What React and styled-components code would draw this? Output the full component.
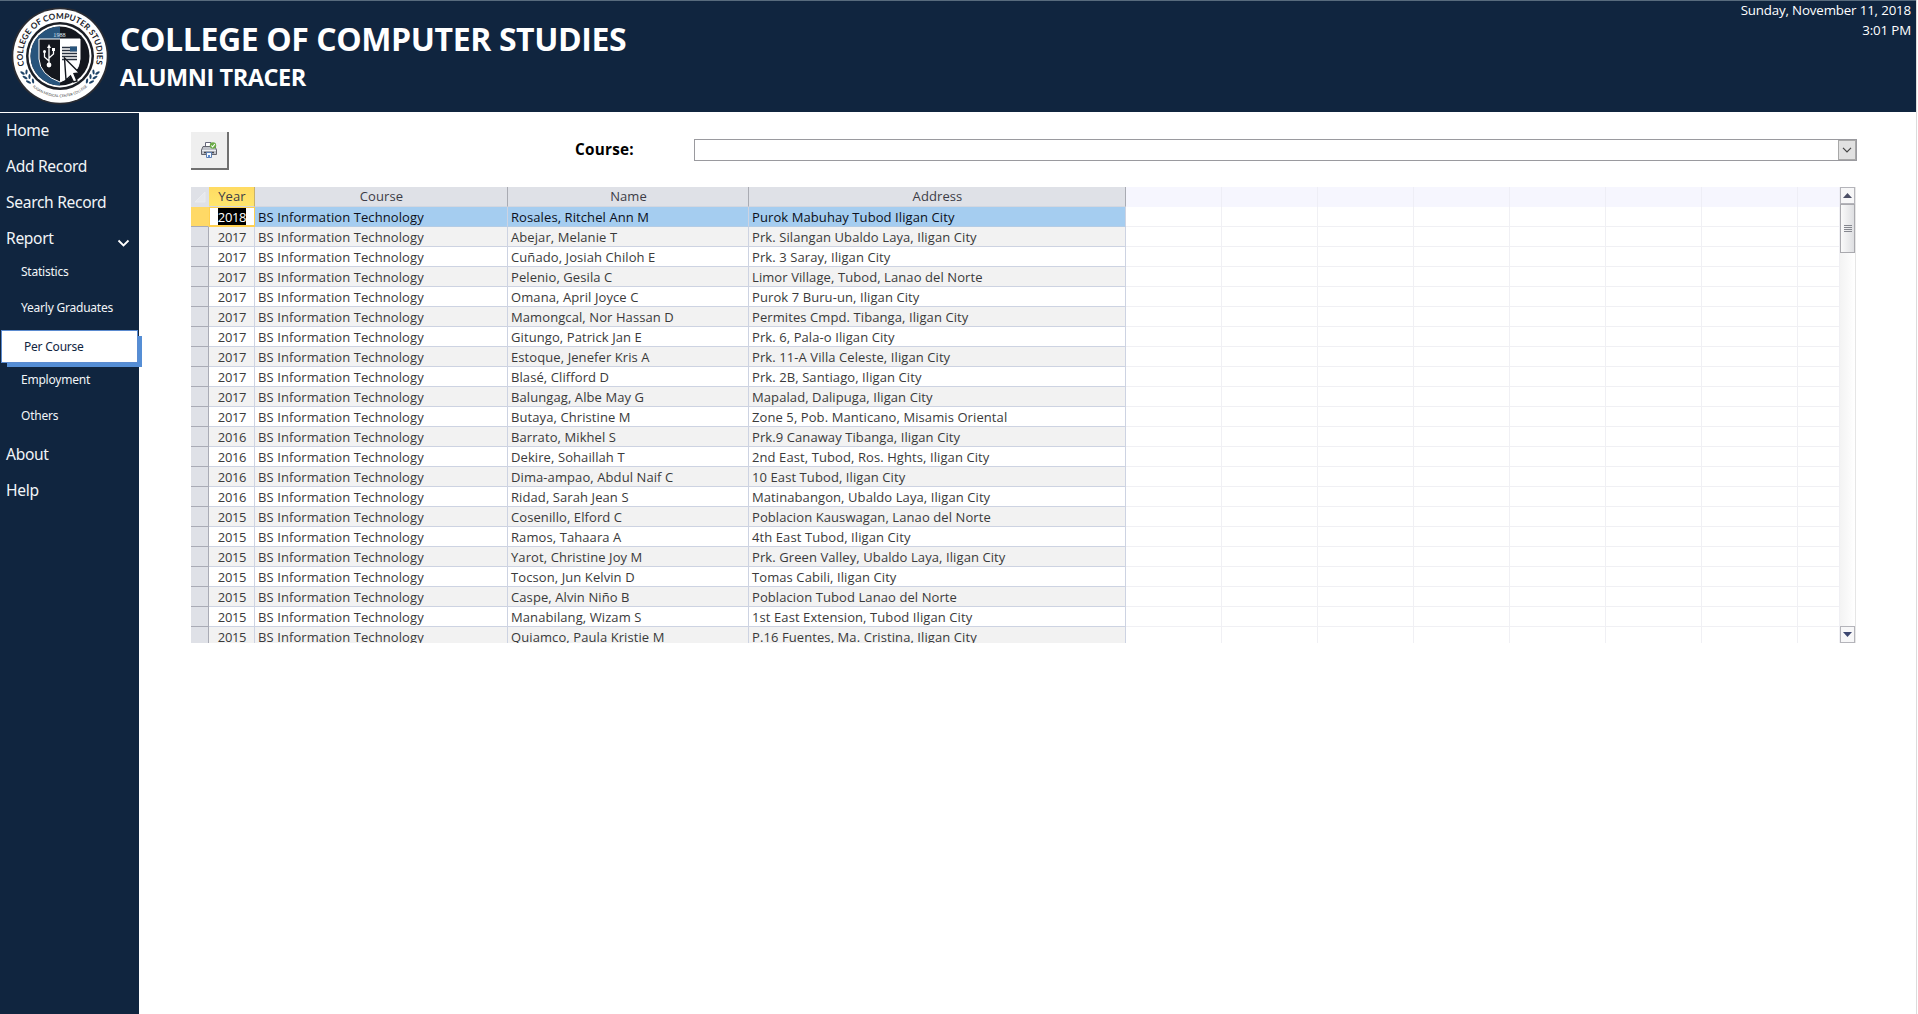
import React from "react";
import styled, { createGlobalStyle, css } from "styled-components";

const NAVY = "#10253f";

const Global = createGlobalStyle`
  * { box-sizing: border-box; }
  html, body { margin: 0; padding: 0; background: #fff; overflow: hidden; }
  body { font-family: "Open Sans", "Noto Sans", sans-serif; }
`;

const Page = styled.div`
  width: 1917px;
  height: 1014px;
  display: flex;
  flex-direction: column;
  border-right: 1px solid #dcdcdc;
  background: #fff;
`;

const Header = styled.header`
  height: 112px;
  flex: none;
  display: flex;
  background: ${NAVY};
  border-top: 1px solid #586b7d;
  color: #fff;
  padding: 0 5px 0 11px;
`;

const LogoSvg = styled.svg`
  width: 98px;
  height: 98px;
  margin-top: 6px;
  flex: none;
`;

const Titles = styled.div`
  flex: 1;
  display: flex;
  flex-direction: column;
  padding: 16px 0 0 11px;
  font-weight: 700;
  white-space: nowrap;
`;

const Title = styled.div`
  font-family: "Open Sans", sans-serif;
  font-size: 32px;
  line-height: 44px;
  letter-spacing: -0.4px;
`;

const Subtitle = styled.div`
  font-family: "Open Sans", sans-serif;
  font-size: 23.5px;
  line-height: 32px;
  letter-spacing: -0.42px;
`;

const Clock = styled.div`
  display: flex;
  flex-direction: column;
  align-items: flex-end;
  margin-top: -1px;
  font-size: 13.3px;
  line-height: 20px;
  letter-spacing: -0.15px;
`;

const Body = styled.div`
  flex: 1;
  display: flex;
  margin-top: 1px;
  min-height: 0;
`;

const Sidebar = styled.nav`
  width: 139px;
  flex: none;
  background: ${NAVY};
  color: #f2f5f8;
  display: flex;
  flex-direction: column;
`;

const NavItem = styled.div`
  height: 36px;
  flex: none;
  display: flex;
  align-items: center;
  justify-content: space-between;
  padding: 0 9px 2px ${(p) => (p.$sub ? 21 : 6)}px;
  font-family: "Noto Sans", sans-serif;
  font-size: ${(p) => (p.$sub ? 12 : 15.6)}px;
  letter-spacing: ${(p) => (p.$sub ? -0.22 : -0.32)}px;
  margin-top: ${(p) => p.$gap || 0}px;
  white-space: nowrap;
  ${(p) =>
    p.$active &&
    css`
      height: 33px;
      width: 137px;
      margin-left: 1px;
      padding-left: 22px;
      padding-bottom: 0;
      color: ${NAVY};
      background: #fff;
      border: 1px solid #5b8bd0;
      box-shadow: 5px 5px 0 -1px #558ed5;
    `}
`;

const Chevron = styled.svg`
  width: 13px;
  height: 9px;
  margin-top: 10px;
`;

const Main = styled.main`
  flex: 1;
  display: flex;
  flex-direction: column;
  padding: 19px 0 0 52px;
`;

const Toolbar = styled.div`
  display: flex;
  align-items: flex-start;
  height: 55px;
`;

const PrintButton = styled.button`
  width: 38px;
  height: 38px;
  padding: 0 0 1px 0;
  display: flex;
  align-items: center;
  justify-content: center;
  background: #efefef;
  border: 0;
  border-right: 2px solid #707070;
  border-bottom: 2px solid #707070;
`;

const FilterLabel = styled.label`
  width: 119px;
  margin-left: 346px;
  padding-top: 6px;
  font-family: "Open Sans", sans-serif;
  font-weight: 700;
  font-size: 15.3px;
  line-height: 22px;
  letter-spacing: 0.25px;
  color: #000;
`;

const Combo = styled.div`
  width: 1163px;
  height: 22px;
  margin-top: 7px;
  display: flex;
  justify-content: flex-end;
  border: 1px solid #9a9a9f;
`;

const ComboArrow = styled.div`
  width: 18px;
  height: 20px;
  display: flex;
  align-items: center;
  justify-content: center;
  background: #e1e1e1;
  border: 1px solid #a8a8a8;
`;

const Sheet = styled.div`
  width: 1665px;
  height: 456px;
  display: flex;
  overflow: hidden;
`;

const Table = styled.div`
  width: 1649px;
  flex: none;
`;

const Line = styled.div`
  display: grid;
  grid-template-columns: 18px 46px 253px 241px 377px repeat(7, 96px) 42px;
  grid-template-rows: 20px;
  height: 20px;
  line-height: 20px;
  font-size: 13px;
  letter-spacing: 0.09px;
  white-space: nowrap;
`;

const Head = styled.div`
  text-align: center;
  color: #3c3c46;
  background: ${(p) => (p.$active ? "linear-gradient(#ffdb62, #ffe66d)" : "#dfe1e7")};
  border-right: 1px solid ${(p) => (p.$active ? "#c9b16a" : "#a9abb3")};
  border-bottom: 1px solid #d3d7e0;
  padding-left: 1px;
  line-height: 18px;
`;

const Corner = styled.div`
  background: #dfe1e7;
  display: flex;
  align-items: center;
  justify-content: center;
`;

const BlankHead = styled.div`
  background: #f6f6fe;
  border-right: 1px solid #eeeef6;
`;

const Selector = styled.div`
  background: ${(p) => (p.$active ? "#ffd966" : "#dfe1e7")};
  border-right: 1px solid ${(p) => (p.$active ? "#ffd966" : "#a9abb5")};
  border-bottom: 1px solid #a9abb5;
`;

const Cell = styled.div`
  height: 20px;
  padding-left: 3px;
  color: ${(p) => (p.$active ? "#0a1020" : "#3a3a3a")};
  background: ${(p) => (p.$active ? "#a5cdf0" : p.$odd ? "#f2f2f2" : "#fff")};
  border-right: 1px solid #cdd3e2;
  border-bottom: 1px solid ${(p) => (p.$active ? "#b3cce6" : "#cdd3e2")};
`;

const YearCell = styled(Cell)`
  padding: 0 8px 0 0;
  text-align: right;
  letter-spacing: -0.4px;
  ${(p) =>
    p.$active &&
    css`
      background: #fff;
      border: 1px solid #ffd04f;
      border-bottom-width: 2px;
    `}
`;

const Selected = styled.span`
  display: inline-block;
  height: 17px;
  line-height: 18px;
  vertical-align: top;
  background: #000;
  color: #fff;
`;

const Blank = styled.div`
  border-right: 1px solid #f0f0f4;
  border-bottom: 1px solid #f0f0f4;
`;

const ScrollBar = styled.div`
  width: 16px;
  height: 456px;
  flex: none;
  display: flex;
  flex-direction: column;
  background: linear-gradient(90deg, #f3f3f3, #fff);
  border-right: 1px solid #e6e6e6;
`;

const ScrollButton = styled.div`
  width: 15px;
  height: 17px;
  flex: none;
  display: flex;
  align-items: center;
  justify-content: center;
  background: #f7f7f8;
  border: 1px solid #b4b4ba;
`;

const Thumb = styled.div`
  width: 15px;
  height: 49px;
  flex: none;
  display: flex;
  align-items: center;
  justify-content: center;
  background: linear-gradient(90deg, #fafafa, #dedfe2);
  border: 1px solid #a9a9ae;
`;

const Track = styled.div`
  flex: 1;
`;

const people = [
  ["2018", "Rosales, Ritchel Ann M", "Purok Mabuhay Tubod Iligan City"],
  ["2017", "Abejar, Melanie T", "Prk. Silangan Ubaldo Laya, Iligan City"],
  ["2017", "Cuñado, Josiah Chiloh E", "Prk. 3 Saray, Iligan City"],
  ["2017", "Pelenio, Gesila C", "Limor Village, Tubod, Lanao del Norte"],
  ["2017", "Omana, April Joyce C", "Purok 7 Buru-un, Iligan City"],
  ["2017", "Mamongcal, Nor Hassan D", "Permites Cmpd. Tibanga, Iligan City"],
  ["2017", "Gitungo, Patrick Jan E", "Prk. 6, Pala-o Iligan City"],
  ["2017", "Estoque, Jenefer Kris A", "Prk. 11-A Villa Celeste, Iligan City"],
  ["2017", "Blasé, Clifford D", "Prk. 2B, Santiago, Iligan City"],
  ["2017", "Balungag, Albe May G", "Mapalad, Dalipuga, Iligan City"],
  ["2017", "Butaya, Christine M", "Zone 5, Pob. Manticano, Misamis Oriental"],
  ["2016", "Barrato, Mikhel S", "Prk.9 Canaway Tibanga, Iligan City"],
  ["2016", "Dekire, Sohaillah T", "2nd East, Tubod, Ros. Hghts, Iligan City"],
  ["2016", "Dima-ampao, Abdul Naif C", "10 East Tubod, Iligan City"],
  ["2016", "Ridad, Sarah Jean S", "Matinabangon, Ubaldo Laya, Iligan City"],
  ["2015", "Cosenillo, Elford C", "Poblacion Kauswagan, Lanao del Norte"],
  ["2015", "Ramos, Tahaara A", "4th East Tubod, Iligan City"],
  ["2015", "Yarot, Christine Joy M", "Prk. Green Valley, Ubaldo Laya, Iligan City"],
  ["2015", "Tocson, Jun Kelvin D", "Tomas Cabili, Iligan City"],
  ["2015", "Caspe, Alvin Niño B", "Poblacion Tubod Lanao del Norte"],
  ["2015", "Manabilang, Wizam S", "1st East Extension, Tubod Iligan City"],
  ["2015", "Quiamco, Paula Kristie M", "P.16 Fuentes, Ma. Cristina, Iligan City"],
];

const blanks = [0, 1, 2, 3, 4, 5, 6, 7];

function Laurel({ flip }) {
  return (
    <g fill="#1f4468" transform={flip ? "translate(98 0) scale(-1 1)" : undefined}>
      <ellipse cx="11.5" cy="66" rx="2.6" ry="1.1" transform="rotate(35 11.5 66)" />
      <ellipse cx="15.5" cy="65" rx="2.6" ry="1.1" transform="rotate(95 15.5 65)" />
      <ellipse cx="14" cy="70.5" rx="2.8" ry="1.1" transform="rotate(30 14 70.5)" />
      <ellipse cx="18.5" cy="69.5" rx="2.6" ry="1.1" transform="rotate(90 18.5 69.5)" />
      <ellipse cx="17.5" cy="75" rx="2.8" ry="1.1" transform="rotate(25 17.5 75)" />
      <ellipse cx="22" cy="74" rx="2.6" ry="1.1" transform="rotate(80 22 74)" />
    </g>
  );
}

function Logo() {
  return (
    <LogoSvg viewBox="0 0 98 98">
      <defs>
        <path id="ringTop" d="M 13.3 58.6 A 37 37 0 1 1 84.7 58.6" />
        <path id="ringBottom" d="M 18 76 A 41 41 0 0 0 80 76" />
      </defs>
      <circle cx="49" cy="49" r="48.5" fill="#2a2c33" />
      <circle cx="49" cy="49" r="46.7" fill="#fff" />
      <circle cx="49" cy="49" r="34" fill="#1b1e25" />
      <circle cx="49" cy="49" r="31.5" fill="#fff" />
      <circle cx="49" cy="49" r="29.5" fill="#14171e" />
      <path d="M49 19.5 A29.5 29.5 0 0 0 49 78.5 Z" fill="#28547c" />
      <path d="M28 32 H69 V52 Q68 68 49 75 Q29 68 28 52 Z" fill="#14171e" stroke="#fff" strokeWidth="1" />
      <path d="M49 32 H69 V52 Q68 68 49 75 Z" fill="#fff" />
      <text x="48.5" y="30" fill="#dfe6ee" fontSize="6.2" fontFamily="Liberation Serif, serif" textAnchor="middle">1988</text>
      <path d="M38 58 V40 M38 54 L33.5 50 V45 M38 51 L42.5 47 V43" stroke="#fff" strokeWidth="1.3" fill="none" />
      <circle cx="38" cy="58" r="2.4" fill="#fff" />
      <path d="M36 41 L38 37 L40 41 Z M41 41 h3 v3 h-3 Z" fill="#fff" />
      <circle cx="33.5" cy="44.5" r="1.5" fill="#fff" />
      <path d="M51 40.5 h15 M51 43.5 h15 M51 46.5 h15 M51 49.5 h15 M51 52.5 h15" stroke="#28313f" strokeWidth="1.3" />
      <path d="M59 39.5 h7 v5 h-7 Z" fill="#28547c" />
      <path d="M53.5 51 L68.5 66 L63 66.5 L66 74 L62.5 75 L59.5 69 L55 73 Z" fill="#fff" stroke="#14171e" strokeWidth="1.4" />
      <text fill="#20222a" fontSize="8.2" fontWeight="700" fontFamily="Lato, sans-serif" textLength="134" lengthAdjust="spacing">
        <textPath href="#ringTop">COLLEGE OF COMPUTER STUDIES</textPath>
      </text>
      <text fill="#333" fontSize="3.6" fontFamily="Lato, sans-serif">
        <textPath href="#ringBottom" startOffset="50%" textAnchor="middle">ILIGAN MEDICAL CENTER COLLEGE</textPath>
      </text>
      <Laurel />
      <Laurel flip />
    </LogoSvg>
  );
}

function PrinterIcon() {
  return (
    <svg width="16" height="16" viewBox="0 0 16 16">
      <path d="M4.5 6 V0.5 H10 V6 Z" fill="#fff" stroke="#66687a" />
      <path d="M2 4.5 H14 L15.5 8 V12.5 H0.5 V8 Z" fill="#bfc2c9" stroke="#62646e" />
      <path d="M1 8.5 H15" stroke="#eceef2" />
      <path d="M3 10.5 H13" stroke="#44464f" strokeWidth="1.5" />
      <path d="M5.5 10.5 H10.5 V15.5 H5.5 Z" fill="#f4f8ff" stroke="#5b7fb3" />
      <path d="M7 13 h2 v2 h-2 Z" fill="#5b8bd0" />
      <circle cx="12" cy="3.5" r="3.2" fill="#6aab47" />
      <path d="M10.3 3.5 L11.6 5 L13.8 2.2" stroke="#fff" fill="none" strokeWidth="1.1" />
    </svg>
  );
}

export default function App() {
  return (
    <Page>
      <Global />
      <Header>
        <Logo />
        <Titles>
          <Title>COLLEGE OF COMPUTER STUDIES</Title>
          <Subtitle>ALUMNI TRACER</Subtitle>
        </Titles>
        <Clock>
          <span>Sunday, November 11, 2018</span>
          <span>3:01 PM</span>
        </Clock>
      </Header>
      <Body>
        <Sidebar>
          <NavItem>Home</NavItem>
          <NavItem>Add Record</NavItem>
          <NavItem>Search Record</NavItem>
          <NavItem>
            Report
            <Chevron viewBox="0 0 13 9">
              <path d="M1.5 1.5 L6.5 6.5 L11.5 1.5" fill="none" stroke="#fff" strokeWidth="1.8" />
            </Chevron>
          </NavItem>
          <NavItem $sub $gap={-3}>Statistics</NavItem>
          <NavItem $sub>Yearly Graduates</NavItem>
          <NavItem $sub $active $gap={4}>Per Course</NavItem>
          <NavItem $sub $gap={-1}>Employment</NavItem>
          <NavItem $sub>Others</NavItem>
          <NavItem $gap={3}>About</NavItem>
          <NavItem>Help</NavItem>
        </Sidebar>
        <Main>
          <Toolbar>
            <PrintButton><PrinterIcon /></PrintButton>
            <FilterLabel>Course:</FilterLabel>
            <Combo>
              <ComboArrow>
                <svg width="10" height="6" viewBox="0 0 10 6">
                  <path d="M1 0.8 L5 4.8 L9 0.8" fill="none" stroke="#444" strokeWidth="1.2" />
                </svg>
              </ComboArrow>
            </Combo>
          </Toolbar>
          <Sheet>
            <Table>
              <Line>
                <Corner>
                  <svg width="12" height="12" viewBox="0 0 12 12">
                    <path d="M11 1 V11 H1 Z" fill="#e6e8ed" stroke="#eaecf0" />
                  </svg>
                </Corner>
                <Head $active>Year</Head>
                <Head>Course</Head>
                <Head>Name</Head>
                <Head>Address</Head>
                {blanks.map((b) => <BlankHead key={b} />)}
              </Line>
              {people.map(([year, name, address], i) => {
                const look = { $active: i === 0, $odd: i % 2 === 1 };
                return (
                  <Line key={name}>
                    <Selector $active={i === 0} />
                    <YearCell {...look}>{i === 0 ? <Selected>{year}</Selected> : year}</YearCell>
                    <Cell {...look}>BS Information Technology</Cell>
                    <Cell {...look}>{name}</Cell>
                    <Cell {...look}>{address}</Cell>
                    {blanks.map((b) => <Blank key={b} />)}
                  </Line>
                );
              })}
            </Table>
            <ScrollBar>
              <ScrollButton>
                <svg width="9" height="5" viewBox="0 0 9 5"><path d="M0 5 L4.5 0 L9 5 Z" fill="#4c4f66" /></svg>
              </ScrollButton>
              <Thumb>
                <svg width="8" height="7" viewBox="0 0 8 7">
                  <path d="M0 .5 H8 M0 2.5 H8 M0 4.5 H8 M0 6.5 H8" stroke="#85878f" />
                </svg>
              </Thumb>
              <Track />
              <ScrollButton>
                <svg width="9" height="5" viewBox="0 0 9 5"><path d="M0 0 L4.5 5 L9 0 Z" fill="#3c4670" /></svg>
              </ScrollButton>
            </ScrollBar>
          </Sheet>
        </Main>
      </Body>
    </Page>
  );
}
